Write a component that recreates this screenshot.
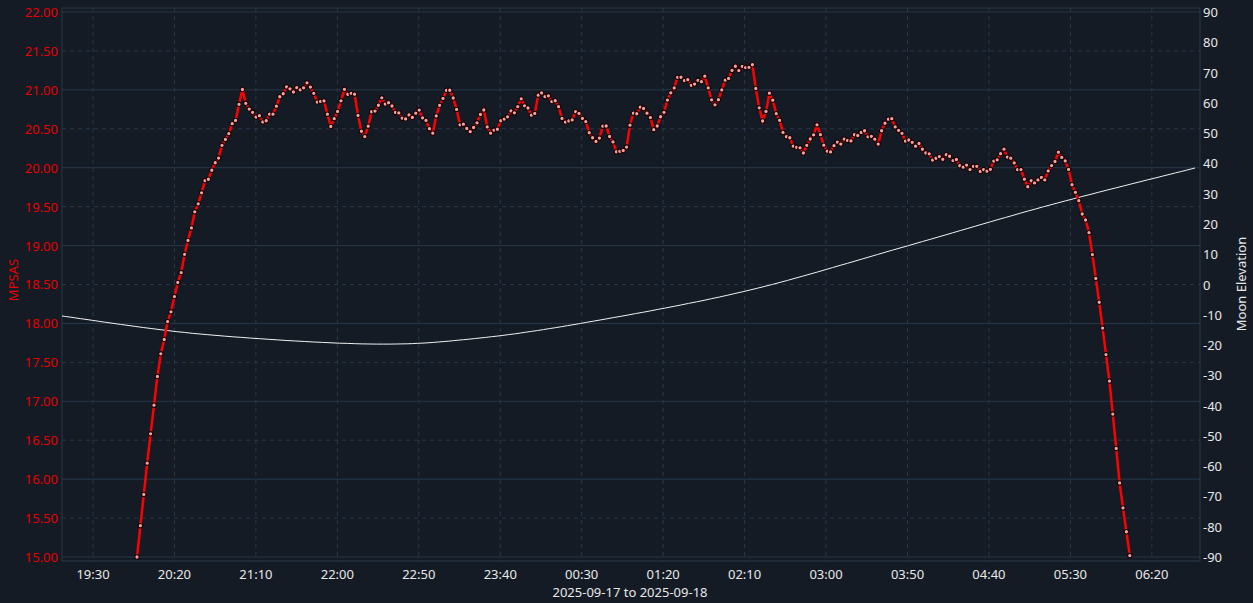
import React from "react";

const L = 62, R = 1200, T = 8, B = 561;
const yV = (v: number) => 12 + (22 - v) * 77.857;
const yM = (e: number) => 12 + (90 - e) * (545 / 180);

const key: [number, number][] = [
  [137,15.0],[148,16.3],[160,17.6],[176,18.4],[190,19.2],[205,19.8],[220,20.2],[235,20.6],[242,21.02],[250,20.7],[263,20.6],[275,20.75],[285,21.0],[310,21.05],[318,20.8],[322,20.95],[332,20.5],[345,21.0],[355,20.95],[363,20.3],[372,20.7],[382,20.9],[400,20.65],[420,20.7],[432,20.45],[440,20.85],[450,21.0],[460,20.6],[473,20.45],[483,20.75],[490,20.45],[500,20.55],[515,20.75],[522,20.9],[533,20.6],[540,21.0],[555,20.85],[565,20.55],[578,20.75],[595,20.3],[605,20.6],[615,20.2],[625,20.2],[632,20.7],[645,20.75],[655,20.5],[668,20.85],[680,21.2],[695,21.05],[705,21.15],[715,20.8],[722,21.0],[735,21.3],[752,21.3],[762,20.55],[770,21.0],[782,20.45],[795,20.3],[805,20.2],[818,20.55],[827,20.2],[845,20.35],[860,20.45],[878,20.35],[887,20.65],[900,20.45],[930,20.15],[950,20.12],[970,20.0],[985,19.95],[1003,20.2],[1020,20.0],[1028,19.75],[1045,19.9],[1058,20.15],[1065,20.1],[1078,19.6],[1090,19.1],[1100,18.2],[1110,17.2],[1120,15.9],[1130,15.0],
];

function interp(x: number) {
  for (let i = 0; i < key.length - 1; i++) {
    const [x0, v0] = key[i], [x1, v1] = key[i + 1];
    if (x >= x0 && x <= x1) return v0 + ((v1 - v0) * (x - x0)) / (x1 - x0);
  }
  return key[key.length - 1][1];
}

const pts: [number, number][] = [];
for (let x = 137, i = 0; x <= 1130; x += 3.4, i++) {
  const n = Math.sin(i * 2.3) * 0.03 + Math.sin(i * 0.77) * 0.025;
  const v = Math.min(22, Math.max(15, interp(x) + (x > 160 && x < 1090 ? n : 0)));
  pts.push([x, yV(v)]);
}

const moonKey: [number, number][] = [[62,316],[200,334],[370,344],[480,338],[600,320],[750,290],[900,248],[1050,205],[1195,168]];
const moonPts: string[] = [];
for (let i = 0; i < moonKey.length - 1; i++) {
  const p0 = moonKey[Math.max(0, i - 1)], p1 = moonKey[i], p2 = moonKey[i + 1], p3 = moonKey[Math.min(moonKey.length - 1, i + 2)];
  for (let t = 0; t < 1; t += 0.05) {
    const t2 = t * t, t3 = t2 * t;
    const f = (a: number, b: number, c: number, d: number) =>
      0.5 * (2 * b + (-a + c) * t + (2 * a - 5 * b + 4 * c - d) * t2 + (-a + 3 * b - 3 * c + d) * t3);
    moonPts.push(`${f(p0[0], p1[0], p2[0], p3[0]).toFixed(1)},${f(p0[1], p1[1], p2[1], p3[1]).toFixed(1)}`);
  }
}
moonPts.push("1195,168");

const xt = ["19:30","20:20","21:10","22:00","22:50","23:40","00:30","01:20","02:10","03:00","03:50","04:40","05:30","06:20"];
const xAt = (i: number) => 93 + i * 81.45;

export default function App() {
  const grid = "#283849";
  const left: number[] = [];
  for (let v = 22; v >= 15; v -= 0.5) left.push(v);
  const right: number[] = [];
  for (let e = 90; e >= -90; e -= 10) right.push(e);
  return (
    <div className="w-[1253px] h-[603px] bg-[#141b25] font-[Inter,'Noto_Sans',sans-serif]">
      <svg width="1253" height="603" viewBox="0 0 1253 603">
        {left.map((v) => (
          <line key={v} x1={L} x2={R} y1={yV(v)} y2={yV(v)} stroke={grid} strokeWidth={1} strokeDasharray={Number.isInteger(v) ? undefined : "4 4"} />
        ))}
        {xt.map((_, i) => (
          <line key={i} x1={xAt(i)} x2={xAt(i)} y1={T} y2={B} stroke={grid} strokeDasharray="4 4" />
        ))}
        <rect x={L} y={T} width={R - L} height={B - T} fill="none" stroke={grid} />
        <polyline points={moonPts.join(" ")} fill="none" stroke="#f2f2f2" strokeWidth={1} />
        <polyline points={pts.map((p) => p.join(",")).join(" ")} fill="none" stroke="#ff0000" strokeWidth={2.5} />
        {pts.map((p, i) => (
          <circle key={i} cx={p[0]} cy={p[1]} r={2.2} fill="#f7a0a0" stroke="#1a0000" strokeWidth={1.1} />
        ))}
        {left.map((v) => (
          <text key={v} x={58} y={yV(v) + 5} textAnchor="end" fontSize={13} fill="#e60000">{v.toFixed(2)}</text>
        ))}
        {right.map((e) => (
          <text key={e} x={1203} y={yM(e) + 5} fontSize={13} fill="#e8e8e8">{e}</text>
        ))}
        {xt.map((t, i) => (
          <text key={t} x={xAt(i)} y={579} textAnchor="middle" fontSize={13} fill="#e8e8e8">{t}</text>
        ))}
        <text x={630} y={597} textAnchor="middle" fontSize={13} fill="#e8e8e8">2025-09-17 to 2025-09-18</text>
        <text transform="translate(18,280) rotate(-90)" textAnchor="middle" fontSize={13} fill="#e60000">MPSAS</text>
        <text transform="translate(1246,284) rotate(-90)" textAnchor="middle" fontSize={13} fill="#e8e8e8">Moon Elevation</text>
      </svg>
    </div>
  );
}
